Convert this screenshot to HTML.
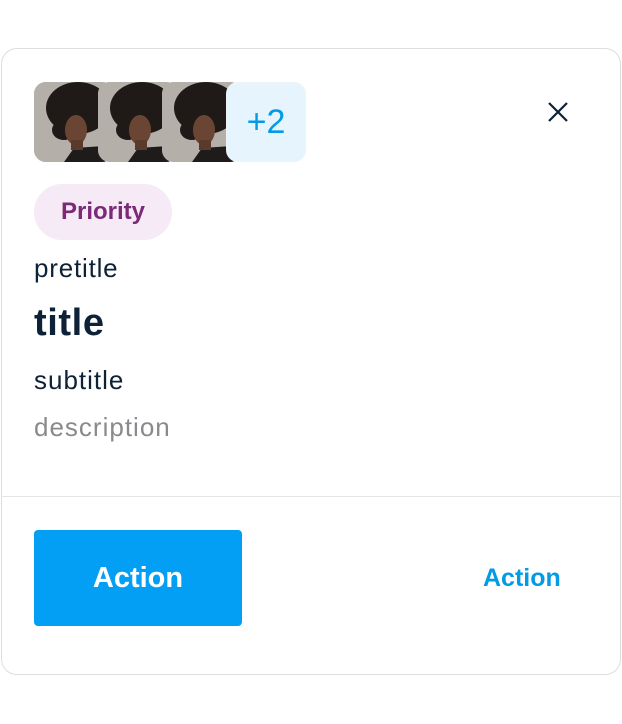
<!DOCTYPE html>
<html><head><meta charset="utf-8"><style>
body{margin:0;width:622px;height:724px;background:#fff;font-family:"Liberation Sans",sans-serif;position:relative;overflow:hidden}
.card{position:absolute;left:1px;top:48px;width:618px;height:625px;border:1px solid #ddd;border-radius:16px}
.av{position:absolute;top:82px;width:80px;height:80px;border-radius:12px;overflow:hidden;background:#b3ada8}
.more{position:absolute;left:226px;top:82px;width:78px;height:78px;border-radius:12px;background:#e6f4fd;border:1px solid #eef3f6;color:#039be5;font-size:34px;line-height:78px;text-align:center}
.chip{position:absolute;left:34px;top:184px;width:138px;height:56px;border-radius:28px;background:#f5eaf5;color:#7b2a7a;font-size:24px;font-weight:bold;line-height:56px;text-align:center}
.t{position:absolute;left:34px;color:#0d2237}
.div{position:absolute;left:1px;width:620px;top:496px;height:1px;background:#e5e5e5}
.btn{position:absolute;left:34px;top:530px;width:208px;height:96px;border-radius:4px;background:#039ff4;color:#fff;font-size:29px;font-weight:bold;line-height:96px;text-align:center}
.link{position:absolute;left:483px;top:564px;color:#039be5;font-size:25px;font-weight:bold}
</style></head><body>
<div class="card"></div>
<svg width="0" height="0" style="position:absolute"><defs><g id="p">
<rect width="80" height="80" fill="#b5afaa"/>
<path d="M30 80 L40 66 L70 64 L80 80Z" fill="#1e1b1a"/>
<ellipse cx="44" cy="26" rx="32" ry="26" fill="#1f1a18"/>
<ellipse cx="30" cy="48" rx="12" ry="10" fill="#1f1a18"/>
<ellipse cx="42" cy="48" rx="11" ry="15" fill="#6b4533"/>
<rect x="37" y="58" width="12" height="10" fill="#5a3a2b"/>
</g></defs></svg>
<div class="av" style="left:34px"><svg width="80" height="80"><use href="#p"/></svg></div>
<div class="av" style="left:98px"><svg width="80" height="80"><use href="#p"/></svg></div>
<div class="av" style="left:162px"><svg width="80" height="80"><use href="#p"/></svg></div>
<div class="more">+2</div>
<svg style="position:absolute;left:547px;top:101px" width="22" height="22"><path d="M2 2L20 20M20 2L2 20" stroke="#0d2237" stroke-width="2.2"/></svg>
<div class="chip">Priority</div>
<div class="t" style="top:253px;font-size:26px;letter-spacing:0.8px">pretitle</div>
<div class="t" style="top:302px;font-size:38px;font-weight:bold;letter-spacing:0.6px">title</div>
<div class="t" style="top:365px;font-size:26px;letter-spacing:1px">subtitle</div>
<div class="t" style="top:412px;font-size:26px;letter-spacing:1px;color:#8a8a8e">description</div>
<div class="div"></div>
<div class="btn">Action</div>
<div class="link">Action</div>
</body></html>
